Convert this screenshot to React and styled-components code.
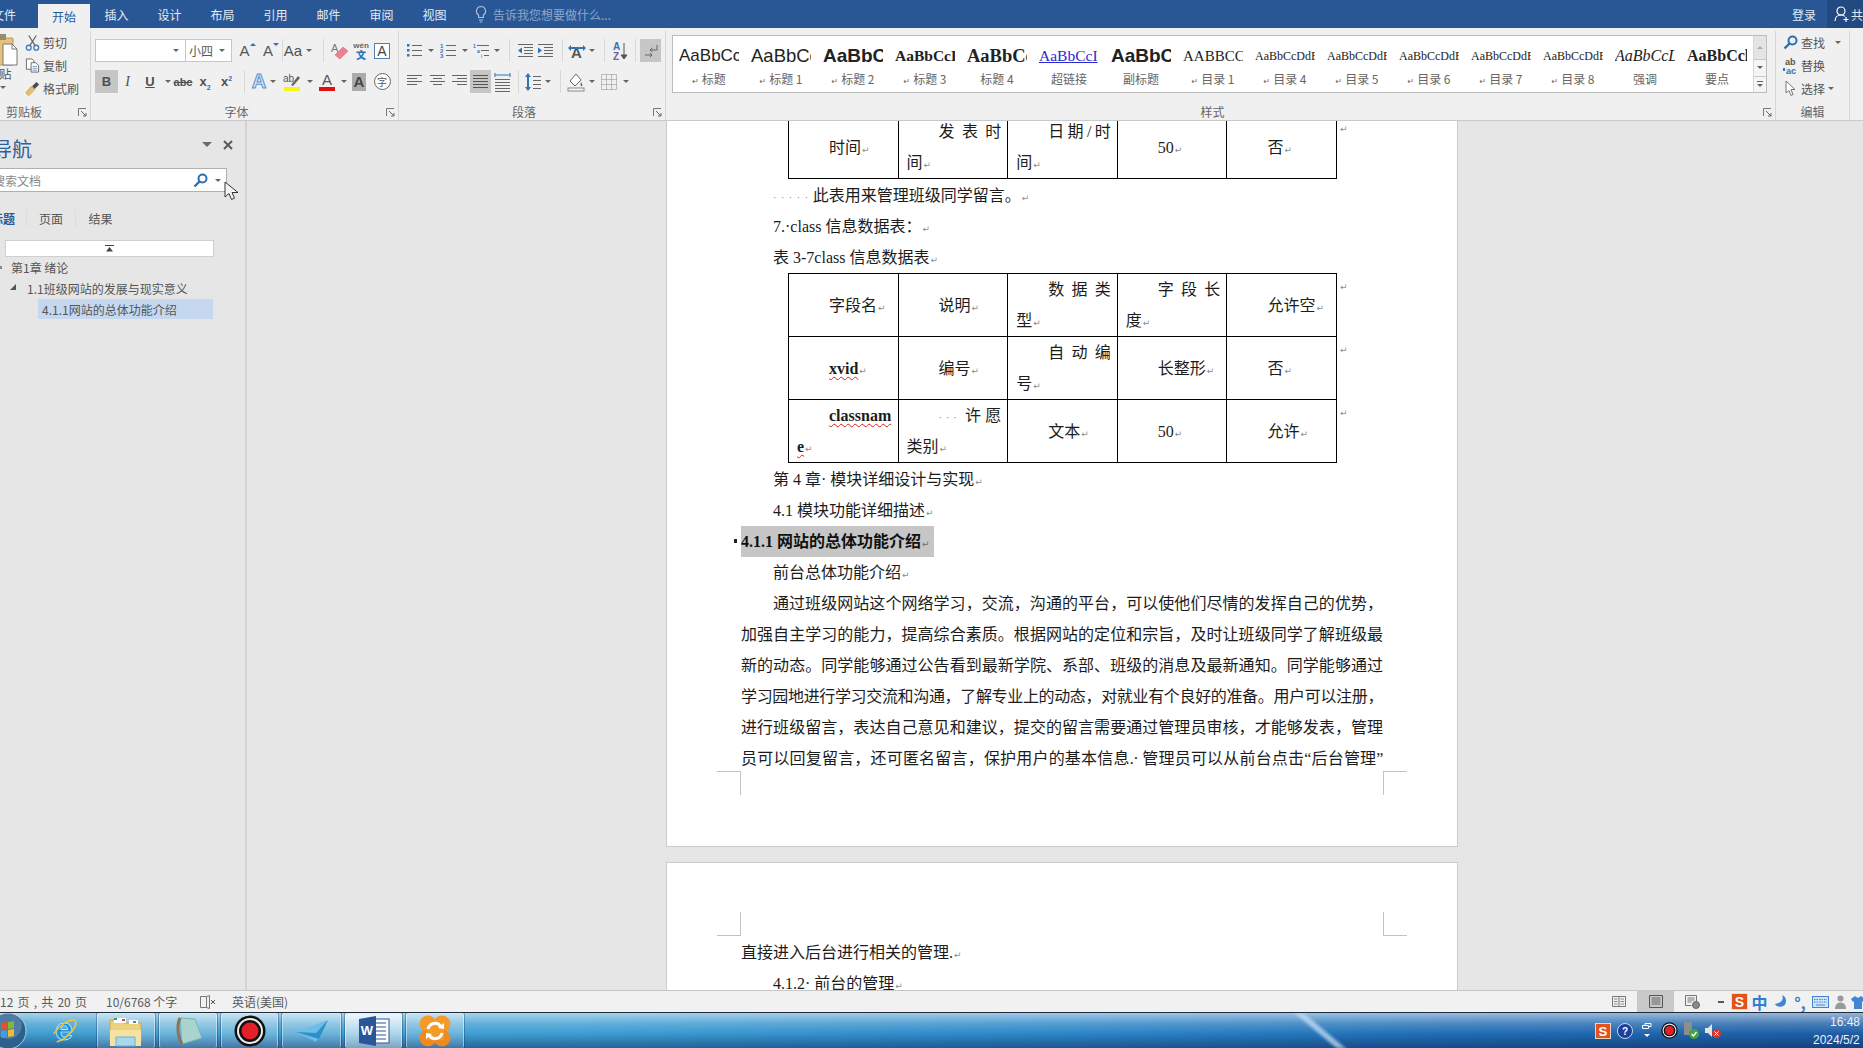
import React from 'react';
import styled, { createGlobalStyle } from 'styled-components';

const UI_FONT = '"Noto Sans CJK SC", "Noto Sans", sans-serif';
const DOC_FONT = '"Liberation Serif", "Noto Sans CJK SC", serif';

const GlobalStyle = createGlobalStyle`
  html, body { margin: 0; padding: 0; height: 100%; overflow: hidden; background: #e6e6e6; }
  #root { height: 100%; }
  * { box-sizing: border-box; }
`;

const Frame = styled.div`
  display: flex;
  flex-direction: column;
  height: 100vh;
  overflow: hidden;
  font-family: ${UI_FONT};
  font-size: 12px;
  color: #444;
`;

/* ---- tab strip ---- */
const TabBar = styled.div`
  display: flex;
  flex: none;
  height: 28px;
  align-items: flex-end;
  background: #295795;
  color: #e4ebf5;
  overflow: hidden;
`;
const Tab = styled.div`
  display: flex;
  flex: none;
  align-items: center;
  justify-content: center;
  width: ${p => p.$w || 53}px;
  margin-left: ${p => p.$ml || 0}px;
  height: ${p => (p.$on ? 24 : 28)}px;
  background: ${p => (p.$on ? '#f0f0f0' : 'transparent')};
  color: ${p => (p.$on ? '#2b579a' : 'inherit')};
`;
const TellMe = styled.div`
  display: flex;
  align-items: center;
  gap: 5px;
  height: 28px;
  margin-left: 13px;
  color: #8ea7cc;
  font-size: 12px;
`;
const Account = styled.div`
  display: flex;
  align-items: center;
  height: 28px;
  margin-left: auto;
`;
const Login = styled.span`
  margin-right: 11px;
`;
const Share = styled.div`
  display: flex;
  flex: none;
  align-items: center;
  gap: 1px;
  width: 36px;
  height: 28px;
  padding-left: 7px;
  background: #234a80;
  white-space: nowrap;
  overflow: hidden;
  svg { flex: none; }
`;

/* ---- ribbon ---- */
const Ribbon = styled.div`
  display: flex;
  flex: none;
  height: 93px;
  background: #f0f0f0;
  border-bottom: 1px solid #c9c9c9;
`;
const Group = styled.section`
  position: relative;
  display: flex;
  flex: none;
  flex-direction: column;
  width: ${p => p.$w}px;
  margin: 3px 0 0;
  border-right: 1px solid #d6d6d6;
`;
const GroupBody = styled.div`
  flex: 1;
  min-height: 0;
  padding: ${p => p.$pad || '8px 0 0 4px'};
`;
const GroupLabel = styled.div`
  flex: none;
  height: 20px;
  padding-right: ${p => (p.$pr === undefined ? 16 : p.$pr)}px;
  line-height: 24px;
  text-align: center;
  color: #666;
  font-size: 12px;
`;
const Launcher = styled.svg`
  position: absolute;
  right: 3px;
  bottom: 3px;
`;
const ToolRow = styled.div`
  display: flex;
  height: 23px;
  align-items: center;
  & + & { margin-top: 8px; }
`;
const Tool = styled.div`
  display: flex;
  flex: none;
  align-items: center;
  justify-content: center;
  width: ${p => p.$w}px;
  height: 23px;
  background: ${p => (p.$on ? '#c6c6c6' : 'transparent')};
  color: #555;
  font-family: "Liberation Sans", sans-serif;
  white-space: nowrap;
`;
const Sep = styled.i`
  flex: none;
  width: 1px;
  height: 23px;
  margin: 0 ${p => p.$r || 0}px 0 ${p => p.$l || 0}px;
  background: #d8d8d8;
`;
const Caret = styled.i`
  display: inline-block;
  flex: none;
  width: 0;
  height: 0;
  margin-left: ${p => p.$ml || 0}px;
  border-left: 3px solid transparent;
  border-right: 3px solid transparent;
  border-top: 3px solid #666;
`;
const InputBox = styled.div`
  display: flex;
  flex: none;
  align-items: center;
  justify-content: space-between;
  width: ${p => p.$w}px;
  height: 23px;
  padding: 0 6px 0 3px;
  background: #fff;
  border: 1px solid #c6c6c6;
  border-left-width: ${p => (p.$joined ? 0 : 1)}px;
  color: #555;
`;
const Grow = styled.span`
  position: relative;
  font-size: 15px;
  color: #555;
  &::after {
    content: '';
    position: absolute;
    top: 1px;
    right: -6px;
    border-left: 3px solid transparent;
    border-right: 3px solid transparent;
    ${p => (p.$down ? 'border-top: 3px solid #3a6ea5;' : 'border-bottom: 3px solid #3a6ea5;')}
  }
`;
const Letter = styled.span`
  font-family: ${p => p.$serif ? '"Liberation Serif", serif' : '"Liberation Sans", sans-serif'};
  font-size: ${p => p.$size || 13}px;
  font-weight: ${p => (p.$bold ? 700 : 400)};
  font-style: ${p => (p.$italic ? 'italic' : 'normal')};
  text-decoration: ${p => p.$line || 'none'};
  color: ${p => p.$color || '#505050'};
  sub, sup { font-size: 7px; color: #3a6ea5; line-height: 0; }
`;
const OutlineA = styled.span`
  font-family: "Liberation Sans", sans-serif;
  font-size: 20px;
  font-weight: 700;
  color: #d5e6f6;
  -webkit-text-stroke: 1px #5a93cc;
`;
const ColorA = styled.span`
  display: flex;
  flex-direction: column;
  align-items: center;
  width: 16px;
  font-size: ${p => p.$size || 15}px;
  line-height: 15px;
  color: #555;
  &::after {
    content: '';
    width: 100%;
    height: 4px;
    background: ${p => p.$bar};
  }
`;
const ShadeA = styled.span`
  display: flex;
  align-items: center;
  justify-content: center;
  width: 14px;
  height: 18px;
  background: #ababab;
  font-size: 15px;
  font-weight: 700;
  color: #444;
`;
const RingChar = styled.span`
  display: flex;
  align-items: center;
  justify-content: center;
  width: 17px;
  height: 17px;
  border: 1px solid #666;
  border-radius: 50%;
  background: #fff;
  font-family: ${UI_FONT};
  font-size: 10px;
  color: #555;
`;
const BoxA = styled.span`
  display: flex;
  align-items: center;
  justify-content: center;
  width: 16px;
  height: 16px;
  border: 1px solid #4f81b5;
  background: #fff;
  font-size: 14px;
  color: #444;
`;
const Wen = styled.span`
  display: flex;
  flex-direction: column;
  align-items: center;
  font-size: 8px;
  line-height: 9px;
  font-weight: 700;
  color: #666;
  b { font-size: 10px; line-height: 10px; color: #2f74b5; font-family: ${UI_FONT}; }
`;

const ClipWrap = styled.div`
  display: flex;
  height: 100%;
  overflow: hidden;
`;
const PasteCol = styled.div`
  display: flex;
  flex: none;
  flex-direction: column;
  width: 25px;
  margin-top: 2px;
  font-size: 12.5px;
  line-height: 15px;
  color: #555;
  span { margin-left: -1px; }
  i { margin: 5px 0 0 0; }
`;
const ListTool = styled.div`
  display: flex;
  align-items: center;
  height: 23px;
  gap: 3px;
  color: #555;
  white-space: nowrap;
`;
const ToolIcon = styled.span`
  display: flex;
  flex: none;
  width: 15px;
  justify-content: center;
`;

const Gallery = styled.div`
  display: flex;
  width: 1095px;
  height: 58px;
  margin-left: 6px;
  background: #fff;
  border: 1px solid #bdbdbd;
`;
const StyleItem = styled.div`
  display: flex;
  flex: none;
  flex-direction: column;
  align-items: center;
  width: 72px;
`;
const Sample = styled.div`
  width: 60px;
  height: 28px;
  margin-top: 6px;
  overflow: hidden;
  white-space: nowrap;
  text-align: ${p => p.$align || 'left'};
  line-height: 28px;
  font-family: ${p => (p.$serif ? '"Liberation Serif", serif' : '"Liberation Sans", sans-serif')};
  font-size: ${p => p.$size}px;
  font-weight: ${p => (p.$bold ? 700 : 400)};
  font-style: ${p => (p.$italic ? 'italic' : 'normal')};
  color: ${p => p.$color || '#222'};
  span { text-decoration: ${p => (p.$link ? 'underline' : 'none')}; }
`;
const StyleName = styled.div`
  margin-top: 1px;
  line-height: 16px;
  font-size: 12px;
  color: #666;
  white-space: nowrap;
  em {
    font-style: normal;
    font-family: "DejaVu Sans", sans-serif;
    font-size: 8px;
    margin-right: 3px;
  }
`;
const GalleryScroll = styled.div`
  display: flex;
  flex: none;
  flex-direction: column;
  width: 13px;
  margin-left: auto;
  background: #f0f0f0;
  border-left: 1px solid #d8d8d8;
`;
const ScrollBtn = styled.div`
  display: flex;
  flex: ${p => p.$grow || 1};
  flex-direction: column;
  align-items: center;
  justify-content: center;
  gap: 2px;
  background: ${p => p.$bg || '#f5f5f5'};
  & + & { border-top: 1px solid #c9c9c9; }
`;
const UpCaret = styled.i`
  width: 0;
  height: 0;
  border-left: 3px solid transparent;
  border-right: 3px solid transparent;
  border-bottom: 3px solid #aaa;
`;
const Dash = styled.i`
  width: ${p => p.$w || 6}px;
  height: ${p => p.$h || 1}px;
  background: ${p => p.$color || '#666'};
`;

/* ---- workspace ---- */
const Workspace = styled.div`
  display: flex;
  flex: 1;
  min-height: 0;
  background: #e6e6e6;
`;
const NavPane = styled.aside`
  position: relative;
  flex: none;
  width: 247px;
  padding-top: 12px;
  background: #e6e6e6;
  border-right: 2px solid #d3d3d3;
  overflow: hidden;
`;
const NavHead = styled.div`
  display: flex;
  align-items: center;
  height: 31px;
  margin-left: -8px;
  padding-right: 12px;
  font-size: 20px;
  color: #2f5f9e;
`;
const NavTitle = styled.span`
  margin-right: auto;
`;
const NavArrow = styled.i`
  width: 0;
  height: 0;
  margin-right: 11px;
  margin-top: -8px;
  border-left: 5px solid transparent;
  border-right: 5px solid transparent;
  border-top: 5px solid #6b6b6b;
`;
const NavClose = styled.svg`
  margin-top: -8px;
`;
const SearchBox = styled.div`
  display: flex;
  align-items: center;
  width: 227px;
  height: 24px;
  margin-top: 4px;
  padding: 0 5px 0 0;
  background: #fff;
  border: 1px solid #b0b0b0;
  border-left: 0;
`;
const SearchText = styled.span`
  margin-left: -7px;
  margin-right: auto;
  color: #8a8a8a;
`;
const NavTabs = styled.div`
  display: flex;
  align-items: center;
  height: 28px;
  margin-top: 12px;
`;
const NavTab = styled.div`
  flex: none;
  width: ${p => p.$w}px;
  margin-left: ${p => p.$ml || 0}px;
  text-align: center;
  color: ${p => (p.$on ? '#2b579a' : '#555')};
  font-weight: ${p => (p.$on ? 700 : 400)};
  white-space: nowrap;
  & + & { border-left: 1px solid #dcdcdc; }
`;
const TreeTop = styled.div`
  display: flex;
  align-items: center;
  justify-content: center;
  width: 209px;
  height: 17px;
  margin: 8px 0 0 5px;
  background: #fff;
  border: 1px solid #cfcfcf;
`;
const TreeRow = styled.div`
  position: relative;
  display: flex;
  align-items: center;
  width: ${p => (p.$on ? '175px' : 'auto')};
  height: ${p => p.$h || 21}px;
  margin-left: ${p => p.$ml}px;
  padding-left: ${p => (p.$on ? 4 : 0)}px;
  background: ${p => (p.$on ? '#c5d8f0' : 'transparent')};
  color: #555;
  font-size: 12px;
  white-space: nowrap;
`;
const TreeArrow = styled.i`
  position: absolute;
  left: -17px;
  top: 7px;
  border-left: 6px solid transparent;
  border-bottom: 6px solid #555;
`;
const TreeDot = styled.i`
  position: absolute;
  left: -12px;
  top: 9px;
  width: 3px;
  height: 3px;
  background: #888;
`;
const Pointer = styled.svg`
  position: absolute;
  left: 224px;
  top: 60px;
`;

const DocArea = styled.main`
  flex: 1;
  min-width: 0;
  overflow: hidden;
  padding-left: 419px;
  font-family: ${DOC_FONT};
  font-size: 16px;
  line-height: 31px;
  color: #1c1c1c;
`;
const Page = styled.article`
  width: 792px;
  margin-top: ${p => p.$mt || 0}px;
  padding: ${p => p.$pt || 0}px 74px ${p => p.$pb || 0}px;
  background: #fff;
  border: 1px solid #cbcbcb;
  border-top-width: ${p => (p.$cut ? 0 : 1)}px;
`;
const Para = styled.p`
  margin: 0;
  height: 31px;
  white-space: nowrap;
  text-indent: ${p => (p.$flush ? 0 : 32)}px;
`;
const BodyLine = styled.p`
  margin: 0;
  height: 31px;
  text-align: justify;
  text-align-last: justify;
  text-indent: ${p => (p.$flush ? 0 : 32)}px;
  letter-spacing: ${p => (p.$tight ? '-0.42px' : '0')};
`;
const Mark = styled.span`
  margin-left: 1px;
  font-family: "DejaVu Sans", sans-serif;
  font-size: 9px;
  line-height: 1;
  color: #8c8c8c;
  font-weight: 400;
`;
const Dots = styled.span`
  color: #777;
  font-size: 10px;
  line-height: 1;
  letter-spacing: ${p => p.$gap || 4}px;
`;
const Heading = styled.h3`
  position: relative;
  display: block;
  width: 193px;
  height: 31px;
  margin: 0;
  background: #c6c6c6;
  font-size: 16px;
  font-weight: 700;
  line-height: 31px;
  color: #111;
  white-space: nowrap;
  span { color: #6e6e6e; }
  &::before {
    content: '';
    position: absolute;
    left: -7px;
    top: 13px;
    width: 3px;
    height: 4px;
    background: #222;
  }
`;
const DocTable = styled.table`
  table-layout: fixed;
  width: 562px;
  margin: 0 0 ${p => p.$mb || 0}px 47px;
  border-collapse: collapse;
`;
const Cell = styled.td`
  width: 109.6px;
  height: 63px;
  padding: 0 6px 0 8px;
  border: 1px solid #000;
  text-align: justify;
  text-indent: 32px;
  word-break: break-all;
  vertical-align: middle;
  line-height: 31px;
`;
const RowMark = styled.td`
  width: 14px;
  padding: 0 0 0 2px;
  border: 0;
  vertical-align: top;
  line-height: 22px;
`;
const Spell = styled.b`
  text-decoration: underline wavy #d62020 1px;
  text-underline-offset: 2px;
`;
const CropRow = styled.div`
  display: flex;
  justify-content: space-between;
  margin: ${p => p.$m || '0'};
`;
const CropMark = styled.i`
  display: block;
  width: 24px;
  height: 24px;
  border-style: solid;
  border-color: #c2c2c2;
  border-width: ${p => (p.$top ? '1px' : '0')} ${p => (p.$left ? '1px' : '0')} ${p => (p.$top ? '0' : '1px')} ${p => (p.$left ? '0' : '1px')};
`;

/* ---- status bar ---- */
const StatusBar = styled.footer`
  display: flex;
  flex: none;
  height: 22px;
  align-items: center;
  background: #f1f1f1;
  border-top: 1px solid #c6c6c6;
  color: #5a5a5a;
  font-size: 12px;
  overflow: hidden;
`;
const StatusItem = styled.div`
  flex: none;
  width: ${p => p.$w}px;
  margin-left: ${p => p.$ml || 0}px;
  display: flex;
  white-space: pre;
  word-spacing: ${p => p.$spread || 0}px;
`;
const StatusRight = styled.div`
  display: flex;
  height: 100%;
  align-items: center;
  margin-left: auto;
  margin-right: -3px;
`;
const StatusBtn = styled.div`
  display: flex;
  flex: none;
  align-items: center;
  justify-content: center;
  width: ${p => p.$w}px;
  height: 100%;
  background: ${p => (p.$on ? '#c9c9c9' : 'transparent')};
`;
const ImeChar = styled.span`
  font-size: 16px;
  font-weight: 700;
  color: #2f7fd0;
`;

/* ---- taskbar ---- */
const Taskbar = styled.nav`
  position: relative;
  display: flex;
  flex: none;
  height: 36px;
  align-items: stretch;
  border-top: 1px solid #1c2b3d;
  background:
    linear-gradient(180deg, rgba(255,255,255,.55) 0%, rgba(255,255,255,.2) 30%, rgba(255,255,255,0) 60%, rgba(15,30,80,.45) 100%),
    linear-gradient(90deg, #3f9ecf 0%, #3c9dd2 30%, #2a84c6 58%, #1f6cb4 78%, #1b5ca4 100%);
  overflow: hidden;
`;
const Streak = styled.i`
  position: absolute;
  left: 1316px;
  top: 0;
  width: 9px;
  height: 36px;
  background: rgba(205, 228, 250, .7);
  transform: skewX(50deg);
  filter: blur(2px);
`;
const StartOrb = styled.div`
  flex: none;
  width: 45px;
  margin-left: -15px;
  display: flex;
  align-items: center;
  justify-content: center;
`;
const TaskPlain = styled.div`
  display: flex;
  flex: none;
  align-items: center;
  justify-content: center;
  width: ${p => p.$w}px;
`;
const TaskBtn = styled.div`
  display: flex;
  flex: none;
  align-items: center;
  justify-content: center;
  width: ${p => p.$w || 58}px;
  margin-right: 4px;
  border: 1px solid rgba(255,255,255,.45);
  border-bottom: 0;
  border-radius: 2px;
  box-shadow: 0 0 0 1px rgba(20,50,90,.35);
  background: ${p => (p.$on
    ? 'linear-gradient(180deg, rgba(255,255,255,.8), rgba(255,255,255,.4))'
    : 'linear-gradient(180deg, rgba(255,255,255,.38), rgba(255,255,255,.12))')};
`;
const Tray = styled.div`
  display: flex;
  align-items: center;
  margin-left: auto;
`;
const TrayIcon = styled.div`
  display: flex;
  flex: none;
  align-items: center;
  justify-content: center;
  width: 22px;
`;
const Clock = styled.div`
  flex: none;
  width: 50px;
  margin-left: 89px;
  color: #eaf2fa;
  font-size: 12px;
  line-height: 18px;
  white-space: nowrap;
  font-family: "Liberation Sans", sans-serif;
  span { display: block; text-align: right; padding-right: 3px; }
`;

/* ---- icons ---- */
const Lines = ({ rows, w = 17, h = 15, gap = 3, y = 1, color = '#666' }) => (
  <svg width={w} height={h} viewBox={`0 0 ${w} ${h}`}>
    {rows.map((r, i) => (
      <line key={i} x1={r[0]} x2={r[1]} y1={y + i * gap + 0.5} y2={y + i * gap + 0.5} stroke={color} />
    ))}
  </svg>
);

const LightBulb = () => (
  <svg width="14" height="18" viewBox="0 0 14 18" fill="none" stroke="#a9bfdd" strokeWidth="1.2">
    <path d="M7 1.5a4.6 4.6 0 0 0-2.4 8.5v2.5h4.8V10A4.6 4.6 0 0 0 7 1.5z" />
    <path d="M5 15h4M5.8 17h2.4" />
  </svg>
);
const PersonPlus = () => (
  <svg width="16" height="18" viewBox="0 0 16 18" fill="none" stroke="#fff" strokeWidth="1.2">
    <circle cx="7" cy="6" r="4" />
    <path d="M1 16c0-3.5 2.5-6 6-6 1.6 0 3 .5 4 1.4M12 12v5M9.500 14.500h5" />
  </svg>
);
const PasteIcon = () => (
  <svg width="20" height="33" viewBox="0 0 20 33">
    <rect x="-6" y="5" width="19" height="27" rx="1" fill="#e8c27a" stroke="#b89858" />
    <rect x="-2" y="1" width="8" height="6" fill="#9a8a70" />
    <path d="M3 11h9l5 5v16H3z" fill="#fff" stroke="#777" />
    <path d="M12 11v5h5" fill="none" stroke="#777" />
  </svg>
);
const ScissorsIcon = () => (
  <svg width="16" height="18" viewBox="0 0 16 18" fill="none">
    <path d="M4 1l7 11M12 1L5 12" stroke="#666" strokeWidth="1.3" />
    <circle cx="4" cy="14" r="2.6" stroke="#3f7fbf" strokeWidth="1.4" />
    <circle cx="12" cy="14" r="2.6" stroke="#3f7fbf" strokeWidth="1.4" />
  </svg>
);
const CopyIcon = () => (
  <svg width="16" height="17" viewBox="0 0 16 17" fill="#fff" stroke="#666">
    <path d="M1.500 1.500h6l2 2v9h-8z" />
    <path d="M6.500 5.500h5l3 3v7h-8z" />
    <path d="M8 9.500h5M8 11.500h5M8 13.500h5" stroke="#7a99bb" />
  </svg>
);
const BrushIcon = () => (
  <svg width="17" height="17" viewBox="0 0 17 17">
    <path d="M1 13l6-7 4 4-6 6c-2 1-3-1-4-3z" fill="#e6bd6c" stroke="#c79a45" strokeWidth=".7" />
    <path d="M8 6l5-5 3 3-5 5z" fill="#4b4b4b" />
  </svg>
);
const EraserIcon = () => (
  <svg width="20" height="20" viewBox="0 0 20 20">
    <text x="1" y="11" fontFamily="Liberation Sans" fontSize="11" fill="#777">A</text>
    <path d="M5 14l8-8 5 4-8 8z" fill="#ee7f95" stroke="#d86a80" strokeWidth=".6" />
  </svg>
);
const HighlightIcon = () => (
  <svg width="18" height="20" viewBox="0 0 18 20">
    <text x="0" y="10" fontFamily="Liberation Sans" fontSize="10" fill="#555">ab</text>
    <path d="M8 13l7-9 2 2-7 8z" fill="#666" />
    <rect x="1" y="15" width="16" height="4" fill="#f5f51c" />
  </svg>
);
const Bullets = ({ numbered }) => (
  <svg width="17" height="15" viewBox="0 0 17 15">
    {[2, 7, 12].map((y, i) => (
      <g key={y}>
        {numbered
          ? <text x="0" y={y + 2.500} fontSize="6" fontFamily="Liberation Sans" fontWeight="700" fill="#2f74b5">{i + 1}</text>
          : <rect x="1" y={y - 1} width="2.500" height="2.500" fill="#2f74b5" />}
        <line x1="6" x2="16" y1={y + .5} y2={y + .5} stroke="#666" />
      </g>
    ))}
  </svg>
);
const MultiList = () => (
  <svg width="18" height="16" viewBox="0 0 18 16">
    <text x="0" y="5" fontSize="5" fontFamily="Liberation Sans" fontWeight="700" fill="#2f74b5">1</text>
    <line x1="4" x2="16" y1="2.500" y2="2.500" stroke="#666" />
    <text x="4" y="10" fontSize="5" fontFamily="Liberation Sans" fontWeight="700" fill="#2f74b5">a</text>
    <line x1="8" x2="16" y1="7.500" y2="7.500" stroke="#666" />
    <text x="8" y="15" fontSize="5" fontFamily="Liberation Sans" fill="#2f74b5">i</text>
    <line x1="11" x2="16" y1="12.500" y2="12.500" stroke="#666" />
  </svg>
);
const IndentIcon = ({ out }) => (
  <svg width="17" height="15" viewBox="0 0 17 15">
    {[1, 4, 7, 10, 13].map(y => (
      <line key={y} x1={y > 3 && y < 12 ? 7 : 1} x2="16" y1={y + .5} y2={y + .5} stroke="#666" />
    ))}
    <path d={out ? 'M1 7.500l4-3v6z' : 'M5 7.500l-4-3v6z'} fill="#2f74b5" />
  </svg>
);
const SwapA = () => (
  <svg width="20" height="16" viewBox="0 0 20 16">
    <text x="4" y="15" fontFamily="Liberation Sans" fontWeight="700" fontSize="15" fill="#555">A</text>
    <path d="M1 5l3-3v2h12V2l3 3-3 3V6H4v2z" fill="#2f74b5" />
  </svg>
);
const SortIcon = () => (
  <svg width="16" height="20" viewBox="0 0 16 20">
    <text x="1" y="9" fontFamily="Liberation Sans" fontSize="10" fontWeight="700" fill="#2f74b5">A</text>
    <text x="1" y="19" fontFamily="Liberation Sans" fontSize="10" fontWeight="700" fill="#7560a8">Z</text>
    <path d="M12 2v15M9 14l3 4 3-4z" stroke="#555" fill="#555" />
  </svg>
);
const ParaDir = () => (
  <svg width="16" height="18" viewBox="0 0 16 18" fill="none" stroke="#666">
    <path d="M14 3v5H7M9.500 6L7 8l2.500 2" />
    <path d="M2 13h7M7 11l2 2-2 2" />
  </svg>
);
const DistIcon = () => (
  <svg width="17" height="20" viewBox="0 0 17 20">
    <path d="M1 3h15M1 1v4M16 1v4" stroke="#2f74b5" fill="none" />
    {[7, 10, 13, 16, 19].map(y => <line key={y} x1="1" x2="16" y1={y + .5} y2={y + .5} stroke="#666" />)}
  </svg>
);
const SpacingIcon = () => (
  <svg width="18" height="20" viewBox="0 0 18 20">
    <path d="M4 1l3 4H5v10h2l-3 4-3-4h2V5H1z" fill="#2f74b5" />
    {[4, 8, 12, 16].map(y => <line key={y} x1="9" x2="17" y1={y + .5} y2={y + .5} stroke="#666" />)}
  </svg>
);
const ShadingIcon = () => (
  <svg width="18" height="20" viewBox="0 0 18 20">
    <path d="M3 9l6-7 5 6-6 6z" fill="#fff" stroke="#666" />
    <path d="M14 10c1 2 2 3 1 4s-2 0-1-4z" fill="#2f74b5" />
    <rect x="1" y="16" width="16" height="3" fill="#f5f5f5" stroke="#888" />
  </svg>
);
const BordersIcon = () => (
  <svg width="16" height="16" viewBox="0 0 16 16" stroke="#8a8a8a" strokeDasharray="1 1" fill="none">
    <rect x=".5" y=".5" width="15" height="15" />
    <path d="M.5 5.500h15M.5 10.500h15M5.500 .5v15M10.500 .5v15" />
  </svg>
);
const LauncherIcon = () => (
  <Launcher width="9" height="9" viewBox="0 0 9 9" fill="none" stroke="#777">
    <path d="M.5 8V.5H8" />
    <path d="M3 3l5 5M8 5v3H5" stroke="#666" />
  </Launcher>
);
const FindIcon = ({ size = 15 }) => (
  <svg width={size} height={size} viewBox="0 0 15 15" fill="none" stroke="#2b6fb3" strokeWidth="2">
    <circle cx="9.500" cy="5.500" r="4" />
    <path d="M6.500 8.500L1.500 13.500" strokeWidth="2.400" />
  </svg>
);
const ReplaceIcon = () => (
  <svg width="15" height="18" viewBox="0 0 15 18">
    <text x="2" y="8" fontFamily="Liberation Sans" fontWeight="700" fontSize="9" fill="#555">ab</text>
    <text x="3" y="17" fontFamily="Liberation Sans" fontWeight="700" fontSize="9" fill="#2f74b5">ac</text>
    <path d="M0 11h2v3H0z" fill="#2f74b5" />
  </svg>
);
const SelectIcon = () => (
  <svg width="13" height="18" viewBox="0 0 13 18">
    <path d="M2 1v12l3-2.500 2 5 2-1-2-5h4z" fill="#fff" stroke="#777" />
  </svg>
);
const CloseX = () => (
  <NavClose width="10" height="10" viewBox="0 0 10 10" stroke="#5a5a5a" strokeWidth="2">
    <path d="M1 1l8 8M9 1l-8 8" />
  </NavClose>
);
const CollapseUp = () => (
  <svg width="9" height="7" viewBox="0 0 9 7">
    <path d="M0 0h9v1H0zM4.500 2L8 6.500H1z" fill="#444" />
  </svg>
);
const BookX = () => (
  <svg width="16" height="14" viewBox="0 0 16 14" fill="none" stroke="#777">
    <path d="M.5 1.500h6v11h-6zM6.500 1.500l3-1v13l-3-1" />
    <path d="M11 5l4 4M15 5l-4 4" stroke="#555" />
  </svg>
);
const ReadView = () => (
  <svg width="14" height="13" viewBox="0 0 14 13" fill="none" stroke="#777">
    <path d="M7 1v11M.5 1.500h6.500M7 1.500h6.500M.5 1.500v10h13v-10" />
    <path d="M2 4h3.500M2 6.500h3.500M2 9h3.500M8.500 4H12M8.500 6.500H12M8.500 9H12" stroke="#888" />
  </svg>
);
const PrintView = () => (
  <svg width="14" height="13" viewBox="0 0 14 13" fill="none" stroke="#555">
    <path d="M.5.500h13v12H.5z" />
    <path d="M2.500 3h9M2.500 5h9M2.500 7h9M2.500 9h9" stroke="#666" />
  </svg>
);
const WebView = () => (
  <svg width="15" height="14" viewBox="0 0 15 14" fill="none" stroke="#777">
    <path d="M.5.500h11v7M.5.500v10h6M2.500 3h7M2.500 5h7M2.500 7h4" />
    <circle cx="11" cy="10" r="3.500" fill="#8a8a8a" stroke="#666" />
  </svg>
);
const SogouS = ({ size = 17 }) => (
  <svg width={size} height={size} viewBox="0 0 17 17">
    <rect x=".5" y=".5" width="16" height="16" fill="#e2531c" stroke="#f4d9c8" />
    <text x="8.500" y="13.500" textAnchor="middle" fontFamily="Liberation Sans" fontWeight="700" fontSize="14" fill="#fff">S</text>
  </svg>
);
const Moon = () => (
  <svg width="13" height="15" viewBox="0 0 13 15">
    <path d="M8 1c2 4 0 8-7 9 2 4 10 4 11-2 .4-3-1-6-4-7z" fill="#3f86d6" />
  </svg>
);
const Keyboard = () => (
  <svg width="17" height="12" viewBox="0 0 17 12" fill="none" stroke="#3f86d6">
    <rect x=".5" y=".5" width="16" height="11" fill="#cfe3f7" />
    <path d="M2 3.500h13M2 6h13" strokeDasharray="1.500 1" />
    <path d="M4 9h9" />
  </svg>
);
const Person = () => (
  <svg width="11" height="14" viewBox="0 0 11 14" fill="#9a9a9a">
    <circle cx="5.500" cy="3.500" r="3" />
    <path d="M0 14c0-4 2-6.500 5.500-6.500S11 10 11 14z" />
  </svg>
);
const Shirt = () => (
  <svg width="14" height="14" viewBox="0 0 14 14">
    <path d="M4 1L0 4l2 3 1-1v8h8V6l1 1 2-3-4-3-3 2z" fill="#3f86d6" />
  </svg>
);
const CursorArrow = () => (
  <Pointer width="15" height="20" viewBox="0 0 15 20">
    <path d="M1 1v15l4-3.500 2.500 6 3-1.300-2.500-5.700H14z" fill="#f4f4f4" stroke="#333" />
  </Pointer>
);

const Orb = () => (
  <svg width="38" height="38" viewBox="0 0 38 38">
    <circle cx="19" cy="19" r="18" fill="#2b5f8e" stroke="#cfe2ef" strokeOpacity=".8" />
    <circle cx="19" cy="13" r="14" fill="#ffffff" fillOpacity=".18" />
    <path d="M12 11l6-1v7l-6 1z" fill="#e2522b" />
    <path d="M19 10l6-1v7l-6 1z" fill="#7cba3d" />
    <path d="M12 19l6-1v7l-6 1z" fill="#3f9fe0" />
    <path d="M19 18l6-1v7l-6 1z" fill="#f2bd2c" />
  </svg>
);
const IeIcon = () => (
  <svg width="32" height="32" viewBox="0 0 32 32">
    <text x="16" y="25" textAnchor="middle" fontFamily="Liberation Sans" fontWeight="700" fontSize="32" fill="#1f93e0" stroke="#e8f6ff" strokeWidth=".6">e</text>
    <ellipse cx="16" cy="16" rx="15" ry="6" fill="none" stroke="#f0c33c" strokeWidth="1.600" transform="rotate(-42 16 16)" strokeDasharray="30 12 30 0" />
  </svg>
);
const FolderIcon = () => (
  <svg width="34" height="32" viewBox="0 0 34 32">
    <path d="M1 5h11l3 3h17v17H1z" fill="#ecd27f" stroke="#c6a74e" />
    <rect x="5" y="3" width="12" height="5" fill="#fff" />
    <rect x="20" y="5" width="9" height="4" fill="#fff" />
    <rect x="5" y="3" width="3" height="2" fill="#3da54a" />
    <rect x="13" y="4" width="3" height="2" fill="#d8443a" />
    <rect x="24" y="6" width="3" height="2" fill="#3f86d6" />
    <path d="M1 15h31v16H1z" fill="#f6e3a2" />
    <path d="M7 22h19v9H7z" fill="#a8d8ee" stroke="#6fb0d0" />
  </svg>
);
const NotesIcon = () => (
  <svg width="32" height="30" viewBox="0 0 32 30">
    <path d="M8 2l15 1 7 19-20 6z" fill="#a8d3cf" stroke="#7fb0ae" />
    <path d="M8 2c-3 6-3 18 2 26" fill="none" stroke="#8a7356" strokeWidth="3" />
  </svg>
);
const RecIcon = ({ size = 32 }) => (
  <svg width={size} height={size} viewBox="0 0 32 32">
    <circle cx="16" cy="16" r="15.500" fill="#111" />
    <circle cx="16" cy="16" r="13" fill="#eee" />
    <circle cx="16" cy="16" r="11" fill="#111" />
    <circle cx="16" cy="16" r="8.500" fill="#e3202a" />
  </svg>
);
const PlaneIcon = () => (
  <svg width="34" height="24" viewBox="0 0 34 24">
    <path d="M1 13l32-12-12 22z" fill="#6ebde6" />
    <path d="M1 13l20 1 12-13-9 19z" fill="#2f8fc8" />
  </svg>
);
const WordIcon = () => (
  <svg width="32" height="32" viewBox="0 0 32 32">
    <rect x="13" y="4" width="18" height="24" fill="#fff" stroke="#2a5699" />
    <path d="M17 8h11M17 12h11M17 16h11M17 20h11M17 24h11" stroke="#2a5699" />
    <path d="M1 4l17-3v30L1 28z" fill="#2a5699" />
    <text x="9" y="20" textAnchor="middle" fontFamily="Liberation Sans" fontWeight="700" fontSize="13" fill="#fff">W</text>
  </svg>
);
const SyncIcon = () => (
  <svg width="34" height="32" viewBox="0 0 34 32">
    <circle cx="10" cy="9" r="8.500" fill="#f39a2a" />
    <circle cx="24" cy="9" r="8.500" fill="#f39a2a" />
    <circle cx="10" cy="23" r="8.500" fill="#ef8a1f" />
    <circle cx="24" cy="23" r="8.500" fill="#ef8a1f" />
    <rect x="8" y="7" width="18" height="18" fill="#f39a2a" />
    <path d="M10 14a7 7 0 0 1 13-2M24 18a7 7 0 0 1-13 2" fill="none" stroke="#fff" strokeWidth="3" />
    <path d="M20 13l6 1v-6zM14 19l-6-1v6z" fill="#fff" />
  </svg>
);
const HelpIcon = () => (
  <svg width="16" height="16" viewBox="0 0 16 16">
    <circle cx="8" cy="8" r="7.500" fill="#1d3f9e" stroke="#c9d6ef" />
    <text x="8" y="12" textAnchor="middle" fontFamily="Liberation Sans" fontWeight="700" fontSize="10" fill="#fff">?</text>
  </svg>
);
const TrayExpand = () => (
  <svg width="12" height="18" viewBox="0 0 12 18" fill="none" stroke="#fff">
    <path d="M1.500 3.500h6v3h-6zM4 3.500v-2h6v3H7.500" />
    <path d="M3 12h6l-3 3z" fill="#fff" stroke="none" />
  </svg>
);
const UsbIcon = () => (
  <svg width="16" height="18" viewBox="0 0 16 18">
    <rect x="1" y="0" width="8" height="13" fill="#8d8d8d" />
    <circle cx="11" cy="12" r="5" fill="#46a23d" />
    <path d="M8.500 12l2 2 3-4" stroke="#fff" strokeWidth="1.300" fill="none" />
  </svg>
);
const SpeakerMute = () => (
  <svg width="18" height="16" viewBox="0 0 18 16">
    <path d="M1 5h3l4-4v13l-4-4H1z" fill="#e4e4e4" />
    <circle cx="12.500" cy="10.500" r="4.500" fill="#d9352b" />
    <path d="M10.500 8.500l4 4M14.500 8.500l-4 4" stroke="#fff" />
  </svg>
);

/* ---- data ---- */
const TABS = ['插入', '设计', '布局', '引用', '邮件', '审阅', '视图'];

const GALLERY = [
  { sample: 'AaBbCc', name: '标题', mark: true, size: 17 },
  { sample: 'AaBbCcDd', name: '标题 1', mark: true, size: 18.500 },
  { sample: 'AaBbCcDd', name: '标题 2', mark: true, size: 19, bold: true },
  { sample: 'AaBbCcDdE', name: '标题 3', mark: true, size: 15.500, bold: true, serif: true },
  { sample: 'AaBbCcDd', name: '标题 4', size: 18.500, bold: true, serif: true },
  { sample: 'AaBbCcI', name: '超链接', size: 15.500, serif: true, color: '#2a2ad0', link: true },
  { sample: 'AaBbCcDd', name: '副标题', size: 19, bold: true },
  { sample: 'AABBCCDD', name: '目录 1', mark: true, size: 15, serif: true },
  { sample: 'AaBbCcDdE', name: '目录 4', mark: true, size: 12, serif: true },
  { sample: 'AaBbCcDdE', name: '目录 5', mark: true, size: 12, serif: true },
  { sample: 'AaBbCcDdE', name: '目录 6', mark: true, size: 12, serif: true },
  { sample: 'AaBbCcDdE', name: '目录 7', mark: true, size: 12, serif: true },
  { sample: 'AaBbCcDdE', name: '目录 8', mark: true, size: 12, serif: true },
  { sample: 'AaBbCcL', name: '强调', size: 16, serif: true, italic: true },
  { sample: 'AaBbCcl', name: '要点', size: 16, serif: true, bold: true },
];

const BODY_LINES = [
  { text: '通过班级网站这个网络学习，交流，沟通的平台，可以使他们尽情的发挥自己的优势，' },
  { text: '加强自主学习的能力，提高综合素质。根据网站的定位和宗旨，及时让班级同学了解班级最', flush: true },
  { text: '新的动态。同学能够通过公告看到最新学院、系部、班级的消息及最新通知。同学能够通过', flush: true },
  { text: '学习园地进行学习交流和沟通，了解专业上的动态，对就业有个良好的准备。用户可以注册，', flush: true, tight: true },
  { text: '进行班级留言，表达自己意见和建议，提交的留言需要通过管理员审核，才能够发表，管理', flush: true },
  { text: '员可以回复留言，还可匿名留言，保护用户的基本信息.· 管理员可以从前台点击“后台管理”', flush: true, tight: true },
];

const P = () => <Mark>↵</Mark>;

function ClipboardGroup() {
  return (
    <Group $w={91}>
      <GroupBody $pad="0 0 0 0">
        <ClipWrap>
          <PasteCol>
            <PasteIcon />
            <span>贴</span>
            <Caret />
          </PasteCol>
          <div>
            <ListTool><ToolIcon><ScissorsIcon /></ToolIcon>剪切</ListTool>
            <ListTool><ToolIcon><CopyIcon /></ToolIcon>复制</ListTool>
            <ListTool><ToolIcon><BrushIcon /></ToolIcon>格式刷</ListTool>
          </div>
        </ClipWrap>
      </GroupBody>
      <GroupLabel $pr={42}>剪贴板</GroupLabel>
      <LauncherIcon />
    </Group>
  );
}

function FontGroup() {
  return (
    <Group $w={308}>
      <GroupBody>
        <ToolRow>
          <InputBox $w={91}><span /><Caret /></InputBox>
          <InputBox $w={46} $joined>小四<Caret /></InputBox>
          <Tool $w={25}><Grow>A</Grow></Tool>
          <Tool $w={22}><Grow $down>A</Grow></Tool>
          <Sep $l={3} />
          <Tool $w={30}><Letter $size={15}>Aa</Letter><Caret $ml={4} /></Tool>
          <Sep $l={10} $r={5} />
          <Tool $w={22}><EraserIcon /></Tool>
          <Tool $w={20}><Wen>wén<b>文</b></Wen></Tool>
          <Tool $w={22}><BoxA>A</BoxA></Tool>
        </ToolRow>
        <ToolRow>
          <Tool $w={23} $on><Letter $bold>B</Letter></Tool>
          <Tool $w={19}><Letter $serif $italic $size={14}>I</Letter></Tool>
          <Tool $w={26}><Letter $line="underline" $bold>U</Letter></Tool>
          <Tool $w={9}><Caret /></Tool>
          <Tool $w={22}><Letter $size={11} $line="line-through" $bold>abc</Letter></Tool>
          <Tool $w={22}><Letter $bold>x<sub>2</sub></Letter></Tool>
          <Tool $w={21}><Letter $bold>x<sup>2</sup></Letter></Tool>
          <Sep $l={7} $r={5} />
          <Tool $w={18}><OutlineA>A</OutlineA></Tool>
          <Tool $w={10}><Caret /></Tool>
          <Tool $w={28}><HighlightIcon /></Tool>
          <Tool $w={8}><Caret /></Tool>
          <Tool $w={26}><ColorA $bar="#e01010">A</ColorA></Tool>
          <Tool $w={8}><Caret /></Tool>
          <Tool $w={22}><ShadeA>A</ShadeA></Tool>
          <Tool $w={24}><RingChar>字</RingChar></Tool>
        </ToolRow>
      </GroupBody>
      <GroupLabel>字体</GroupLabel>
      <LauncherIcon />
    </Group>
  );
}

function ParagraphGroup() {
  return (
    <Group $w={267}>
      <GroupBody>
        <ToolRow>
          <Tool $w={23}><Bullets /></Tool>
          <Tool $w={10}><Caret /></Tool>
          <Tool $w={24}><Bullets numbered /></Tool>
          <Tool $w={10}><Caret /></Tool>
          <Tool $w={24}><MultiList /></Tool>
          <Tool $w={6}><Caret /></Tool>
          <Sep $l={9} $r={5} />
          <Tool $w={20}><IndentIcon out /></Tool>
          <Tool $w={21}><IndentIcon /></Tool>
          <Sep $l={6} $r={3} />
          <Tool $w={22}><SwapA /></Tool>
          <Tool $w={7}><Caret /></Tool>
          <Sep $l={9} $r={5} />
          <Tool $w={20}><SortIcon /></Tool>
          <Sep $l={5} $r={4} />
          <Tool $w={21} $on><ParaDir /></Tool>
        </ToolRow>
        <ToolRow>
          <Tool $w={23}><Lines rows={[[1, 16], [1, 11], [1, 16], [1, 11]]} /></Tool>
          <Tool $w={23}><Lines rows={[[1, 16], [4, 13], [1, 16], [4, 13]]} /></Tool>
          <Tool $w={21}><Lines rows={[[1, 16], [6, 16], [1, 16], [6, 16]]} /></Tool>
          <Tool $w={21} $on><Lines rows={[[1, 16], [1, 16], [1, 16], [1, 16], [1, 16]]} color="#555" /></Tool>
          <Tool $w={22}><DistIcon /></Tool>
          <Sep $l={5} $r={3} />
          <Tool $w={22}><SpacingIcon /></Tool>
          <Tool $w={8}><Caret /></Tool>
          <Sep $l={8} $r={4} />
          <Tool $w={22}><ShadingIcon /></Tool>
          <Tool $w={10}><Caret /></Tool>
          <Tool $w={24}><BordersIcon /></Tool>
          <Tool $w={10}><Caret /></Tool>
        </ToolRow>
      </GroupBody>
      <GroupLabel>段落</GroupLabel>
      <LauncherIcon />
    </Group>
  );
}

function StylesGroup() {
  return (
    <Group $w={1110}>
      <GroupBody $pad="4px 0 0 0">
        <Gallery>
          {GALLERY.map(s => (
            <StyleItem key={s.name}>
              <Sample $size={s.size} $bold={s.bold} $serif={s.serif} $italic={s.italic} $color={s.color} $link={s.link}>
                <span>{s.sample}</span>
              </Sample>
              <StyleName>{s.mark && <em>↵</em>}{s.name}</StyleName>
            </StyleItem>
          ))}
          <GalleryScroll>
            <ScrollBtn $grow={1.500} $bg="#e4e4e4"><UpCaret /></ScrollBtn>
            <ScrollBtn><Caret /></ScrollBtn>
            <ScrollBtn><Dash /><Caret /></ScrollBtn>
          </GalleryScroll>
        </Gallery>
      </GroupBody>
      <GroupLabel>样式</GroupLabel>
      <LauncherIcon />
    </Group>
  );
}

function EditGroup() {
  return (
    <Group $w={74}>
      <GroupBody $pad="0 0 0 7px">
        <ListTool><ToolIcon><FindIcon /></ToolIcon>查找<Caret $ml={7} /></ListTool>
        <ListTool><ToolIcon><ReplaceIcon /></ToolIcon>替换</ListTool>
        <ListTool><ToolIcon><SelectIcon /></ToolIcon>选择<Caret /></ListTool>
      </GroupBody>
      <GroupLabel $pr={0}>编辑</GroupLabel>
    </Group>
  );
}

function Navigation() {
  return (
    <NavPane>
      <NavHead>
        <NavTitle>导航</NavTitle>
        <NavArrow />
        <CloseX />
      </NavHead>
      <SearchBox>
        <SearchText>搜索文档</SearchText>
        <FindIcon />
        <Caret $ml={7} />
      </SearchBox>
      <NavTabs>
        <NavTab $w={24} $ml={-9} $on>标题</NavTab>
        <NavTab $w={49} $ml={11}>页面</NavTab>
        <NavTab $w={50}>结果</NavTab>
      </NavTabs>
      <TreeTop><CollapseUp /></TreeTop>
      <TreeRow $ml={11} $h={20}><TreeDot />第1章 绪论</TreeRow>
      <TreeRow $ml={27} $h={22}><TreeArrow />1.1班级网站的发展与现实意义</TreeRow>
      <TreeRow $ml={38} $on $h={20}>4.1.1网站的总体功能介绍</TreeRow>
      <CursorArrow />
    </NavPane>
  );
}

function Document() {
  return (
    <DocArea>
      <Page $cut $mt={-6} $pb={51}>
        <DocTable $mb={1}>
          <tbody>
            <tr>
              <Cell>时间<P /></Cell>
              <Cell>发表时间<P /></Cell>
              <Cell>日期/时间<P /></Cell>
              <Cell>50<P /></Cell>
              <Cell>否<P /></Cell>
              <RowMark><P /></RowMark>
            </tr>
          </tbody>
        </DocTable>
        <Para><Dots $gap={4.6}>·····</Dots>此表用来管理班级同学留言。<P /></Para>
        <Para>7.·class 信息数据表：<P /></Para>
        <Para>表 3-7class 信息数据表<P /></Para>
        <DocTable $mb={1}>
          <tbody>
            <tr>
              <Cell>字段名<P /></Cell>
              <Cell>说明<P /></Cell>
              <Cell>数据类型<P /></Cell>
              <Cell>字段长度<P /></Cell>
              <Cell>允许空<P /></Cell>
              <RowMark><P /></RowMark>
            </tr>
            <tr>
              <Cell><Spell>xvid</Spell><P /></Cell>
              <Cell>编号<P /></Cell>
              <Cell>自动编号<P /></Cell>
              <Cell>长整形<P /></Cell>
              <Cell>否<P /></Cell>
              <RowMark><P /></RowMark>
            </tr>
            <tr>
              <Cell><Spell>classname</Spell><P /></Cell>
              <Cell><Dots>···</Dots>许愿类别<P /></Cell>
              <Cell>文本<P /></Cell>
              <Cell>50<P /></Cell>
              <Cell>允许<P /></Cell>
              <RowMark><P /></RowMark>
            </tr>
          </tbody>
        </DocTable>
        <Para>第 4 章· 模块详细设计与实现<P /></Para>
        <Para>4.1 模块功能详细描述<P /></Para>
        <Heading>4.1.1 网站的总体功能介绍<P /></Heading>
        <Para>前台总体功能介绍<P /></Para>
        {BODY_LINES.map(l => (
          <BodyLine key={l.text} $flush={l.flush} $tight={l.tight}>{l.text}</BodyLine>
        ))}
        <CropRow $m="-3px -24px 0">
          <CropMark $top $left />
          <CropMark $top />
        </CropRow>
      </Page>
      <Page $mt={15} $pt={49}>
        <CropRow $m="0 -24px 1px">
          <CropMark $left />
          <CropMark />
        </CropRow>
        <Para $flush>直接进入后台进行相关的管理.<P /></Para>
        <Para>4.1.2· 前台的管理<P /></Para>
      </Page>
    </DocArea>
  );
}

export default function App() {
  return (
    <Frame lang="zh-CN">
      <GlobalStyle />
      <TabBar>
        <Tab $w={64} $ml={-28}>文件</Tab>
        <Tab $w={52} $ml={2} $on>开始</Tab>
        {TABS.map(t => <Tab key={t}>{t}</Tab>)}
        <TellMe><LightBulb />告诉我您想要做什么...</TellMe>
        <Account>
          <Login>登录</Login>
          <Share><PersonPlus />共</Share>
        </Account>
      </TabBar>

      <Ribbon>
        <ClipboardGroup />
        <FontGroup />
        <ParagraphGroup />
        <StylesGroup />
        <EditGroup />
      </Ribbon>

      <Workspace>
        <Navigation />
        <Document />
      </Workspace>

      <StatusBar>
        <StatusItem $w={106} $spread={1.5}>12 页 , 共 20 页</StatusItem>
        <StatusItem $w={94}>10/6768 个字</StatusItem>
        <StatusItem $w={32}><BookX /></StatusItem>
        <StatusItem $w={70}>英语(美国)</StatusItem>
        <StatusRight>
          <StatusBtn $w={37}><ReadView /></StatusBtn>
          <StatusBtn $w={37} $on><PrintView /></StatusBtn>
          <StatusBtn $w={37}><WebView /></StatusBtn>
          <StatusBtn $w={19}><Dash $w={6} $h={2} $color="#555" /></StatusBtn>
          <StatusBtn $w={18}><SogouS /></StatusBtn>
          <StatusBtn $w={23}><ImeChar>中</ImeChar></StatusBtn>
          <StatusBtn $w={19}><Moon /></StatusBtn>
          <StatusBtn $w={20}><ImeChar>°,</ImeChar></StatusBtn>
          <StatusBtn $w={20}><Keyboard /></StatusBtn>
          <StatusBtn $w={20}><Person /></StatusBtn>
          <StatusBtn $w={16}><Shirt /></StatusBtn>
        </StatusRight>
      </StatusBar>

      <Taskbar>
        <Streak />
        <StartOrb><Orb /></StartOrb>
        <TaskPlain $w={67}><IeIcon /></TaskPlain>
        <TaskBtn><FolderIcon /></TaskBtn>
        <TaskBtn $w={58}><NotesIcon /></TaskBtn>
        <TaskBtn $w={57}><RecIcon /></TaskBtn>
        <TaskBtn $w={59}><PlaneIcon /></TaskBtn>
        <TaskBtn $w={57} $on><WordIcon /></TaskBtn>
        <TaskBtn $w={58}><SyncIcon /></TaskBtn>
        <Tray>
          <TrayIcon><SogouS size={16} /></TrayIcon>
          <TrayIcon><HelpIcon /></TrayIcon>
          <TrayIcon><TrayExpand /></TrayIcon>
          <TrayIcon><RecIcon size={17} /></TrayIcon>
          <TrayIcon><UsbIcon /></TrayIcon>
          <TrayIcon><SpeakerMute /></TrayIcon>
          <Clock><span>16:48</span>2024/5/2</Clock>
        </Tray>
      </Taskbar>
    </Frame>
  );
}
